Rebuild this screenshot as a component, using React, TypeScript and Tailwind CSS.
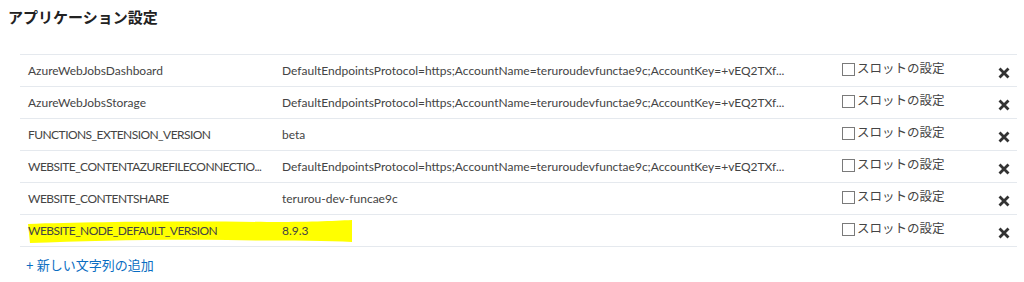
const SETTINGS = [
  {
    name: "AzureWebJobsDashboard",
    value: "DefaultEndpointsProtocol=https;AccountName=teruroudevfunctae9c;AccountKey=+vEQ2TXf...",
  },
  {
    name: "AzureWebJobsStorage",
    value: "DefaultEndpointsProtocol=https;AccountName=teruroudevfunctae9c;AccountKey=+vEQ2TXf...",
  },
  { name: "FUNCTIONS_EXTENSION_VERSION", value: "beta", caps: true },
  {
    name: "WEBSITE_CONTENTAZUREFILECONNECTIO...",
    value: "DefaultEndpointsProtocol=https;AccountName=teruroudevfunctae9c;AccountKey=+vEQ2TXf...",
    caps: true,
  },
  { name: "WEBSITE_CONTENTSHARE", value: "terurou-dev-funcae9c", caps: true },
  { name: "WEBSITE_NODE_DEFAULT_VERSION", value: "8.9.3", caps: true, marked: true },
];

const DeleteIcon = () => (
  <svg width="12" height="12" viewBox="0 0 12 12" className="text-[#333]">
    <path d="M2.5 2.5 L9.5 9.5 M9.5 2.5 L2.5 9.5" stroke="currentColor" strokeWidth="2.8" strokeLinecap="square" />
  </svg>
);

const Marker = () => (
  <svg className="absolute left-[7px] top-[4px]" width="326" height="24" viewBox="0 0 326 24">
    <path
      d="M1 5 C60 3 150 2 240 3 C280 3 306 2 325 1 L325 23 C296 21 250 22 200 21 C130 20 60 22 3 24 Z"
      fill="#ffff00"
    />
  </svg>
);

const App = () => {
  return (
    <div className="w-[1024px] h-[282px] bg-white text-[13px] text-[#444] font-['Lato','Noto_Sans_CJK_JP',sans-serif] overflow-hidden">
      <h2 className="pl-2 pt-[6px] text-[15px] font-bold text-[#222] leading-[22px]">アプリケーション設定</h2>
      <div className="ml-5 mr-[7px] mt-[26px] border-t border-[#e5e9ee]">
        {SETTINGS.map((item) => (
          <div key={item.name} className="relative h-8 flex items-center border-b border-[#e5e9ee]">
            {item.marked && <Marker />}
            <span
              className={
                item.caps
                  ? "relative w-[262px] pl-2 whitespace-nowrap text-[12px] tracking-[-0.55px]"
                  : "relative w-[262px] pl-2 whitespace-nowrap text-[12px]"
              }
            >
              {item.name}
            </span>
            <span className="relative w-[560px] whitespace-nowrap text-[12px]">{item.value}</span>
            <span className="relative flex items-center gap-[2px] -mt-[3px] w-[152px] text-[12.5px]">
              <span className="w-[13px] h-[13px] border border-[#7a7a7a] bg-white" />
              スロットの設定
            </span>
            <span className="relative mt-[4px] ml-[4px]">
              <DeleteIcon />
            </span>
          </div>
        ))}
      </div>
      <div className="pl-[26px] pt-[9px] text-[#0a6dc2]">+ 新しい文字列の追加</div>
    </div>
  );
};

export default App;
